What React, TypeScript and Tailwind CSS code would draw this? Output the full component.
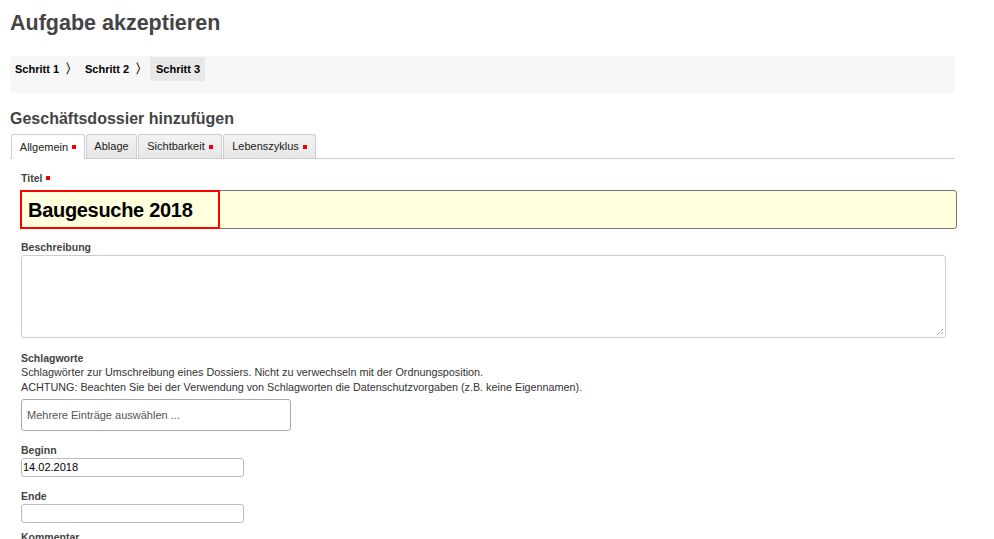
export default function App() {
  const tabs = [
    { label: "Allgemein", required: true, active: true, w: "w-[74px]" },
    { label: "Ablage", required: false, active: false, w: "w-[51px]" },
    { label: "Sichtbarkeit", required: true, active: false, w: "w-[84px]" },
    { label: "Lebenszyklus", required: true, active: false, w: "w-[93px]" },
  ];

  return (
    <div className="min-h-[539px] bg-white font-['Liberation_Sans',Arial,sans-serif] text-[#333] pl-[10px] pr-[39px]">
      {/* Page title */}
      <h1 className="pt-[9px] text-[21.5px] font-bold leading-[28px] text-[#444]">
        Aufgabe akzeptieren
      </h1>

      {/* Wizard steps */}
      <div className="mt-[19px] h-[37px] bg-[#f7f7f7] pl-[5px] pt-[1px]">
        <div className="flex items-start text-[11px] font-bold text-black">
          <span className="h-[24px] leading-[24px]">Schritt 1</span>
          <span className="mx-[6px] h-[24px] leading-[24px] text-[13px] text-[#222]">〉</span>
          <span className="h-[24px] leading-[24px] ml-[1px]">Schritt 2</span>
          <span className="mx-[6px] h-[24px] leading-[24px] text-[13px] text-[#222]">〉</span>
          <span className="h-[24px] leading-[24px] bg-[#e8e8e8] pl-[6px] pr-[5px] -ml-[4px]">Schritt 3</span>
        </div>
      </div>

      {/* Form heading */}
      <h2 className="mt-[15px] text-[16px] font-bold leading-[22px] text-[#444]">
        Geschäftsdossier hinzufügen
      </h2>

      {/* Tabs */}
      <div className="mt-[4px] flex h-[25px] items-end gap-[1px] border-b border-[#ccc] pl-[1px]">
        {tabs.map((t) => (
          <div
            key={t.label}
            className={
              t.active
                ? `${t.w} -mb-px flex h-[25px] items-center justify-center gap-[4px] rounded-t-[3px] border border-b-0 border-[#ccc] bg-white text-[11px] text-[#222]`
                : `${t.w} flex h-[24px] items-center justify-center gap-[4px] rounded-t-[3px] border border-b-0 border-[#ccc] bg-gradient-to-b from-[#f4f4f4] to-[#e6e6e6] text-[11px] text-[#222]`
            }
          >
            <span>{t.label}</span>
            {t.required && <span className="h-[4px] w-[4px] bg-[#e00]" />}
          </div>
        ))}
      </div>

      <div className="pl-[11px]">
        {/* Titel */}
        <div className="mt-[13px] flex items-center gap-[4px] text-[10.5px] font-bold leading-[12px] text-[#444]">
          Titel <span className="h-[4px] w-[4px] bg-[#e00]" />
        </div>
        <div className="relative mt-[6px] -ml-[1px] mr-[-2px] h-[39px] rounded-[3px] border border-[#777] bg-[#ffffdd]">
          <div className="absolute -left-px -top-px h-[39px] w-[200px] border-2 border-[#f00]" />
          <div className="pl-[7px] pt-[8px] text-[20px] font-bold leading-[22px] text-black tracking-[-0.3px]">
            Baugesuche 2018
          </div>
        </div>

        {/* Beschreibung */}
        <div className="mt-[12px] text-[10.5px] font-bold leading-[12px] text-[#444]">Beschreibung</div>
        <div className="relative mt-[2px] mr-[9px] h-[83px] rounded-[3px] border border-[#ccc] bg-white">
          <svg className="absolute bottom-[1px] right-[1px]" width="9" height="9" viewBox="0 0 9 9">
            <path d="M8 2 L2 8 M8 5 L5 8" stroke="#777" strokeWidth="1" strokeDasharray="1 1" />
          </svg>
        </div>

        {/* Schlagworte */}
        <div className="mt-[14px] text-[10.5px] font-bold leading-[12px] text-[#444]">Schlagworte</div>
        <div className="mt-[1px] text-[10.8px] leading-[15px] text-[#333]">
          Schlagwörter zur Umschreibung eines Dossiers. Nicht zu verwechseln mit der Ordnungsposition.
        </div>
        <div className="text-[10.8px] leading-[15px] text-[#333]">
          ACHTUNG: Beachten Sie bei der Verwendung von Schlagworten die Datenschutzvorgaben (z.B. keine Eigennamen).
        </div>
        <div className="mt-[4px] flex h-[32px] w-[270px] items-center rounded-[3px] border border-[#aaa] pl-[5px] text-[11px] text-[#555]">
          Mehrere Einträge auswählen ...
        </div>

        {/* Beginn */}
        <div className="mt-[13px] text-[10.5px] font-bold leading-[12px] text-[#444]">Beginn</div>
        <div className="mt-[2px] flex h-[19px] w-[223px] items-center rounded-[3px] border border-[#bbb] pl-[1px] text-[11px] text-black">
          14.02.2018
        </div>

        {/* Ende */}
        <div className="mt-[13px] text-[10.5px] font-bold leading-[12px] text-[#444]">Ende</div>
        <div className="mt-[2px] h-[19px] w-[223px] rounded-[3px] border border-[#bbb]" />

        {/* Kommentar */}
        <div className="mt-[8px] text-[10.5px] font-bold leading-[12px] text-[#444]">Kommentar</div>
      </div>
    </div>
  );
}
